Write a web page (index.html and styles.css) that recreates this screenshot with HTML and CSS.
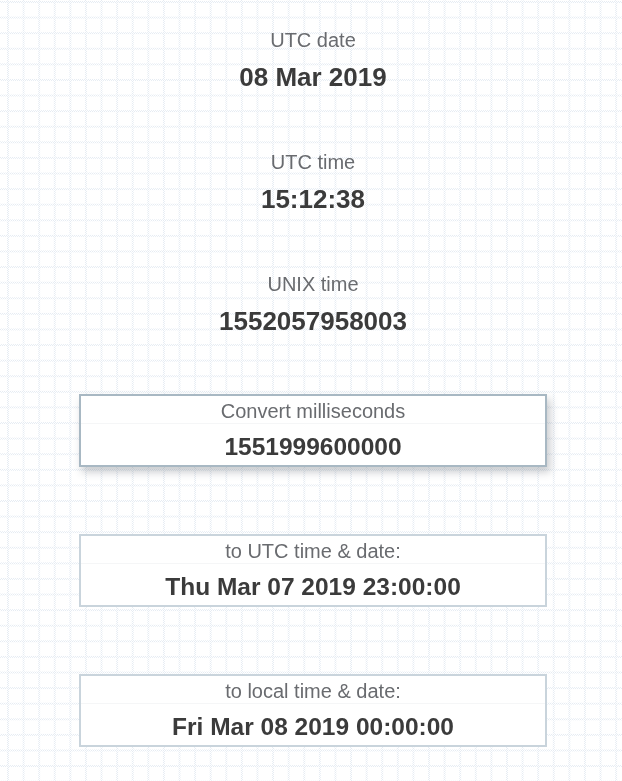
FILE: index.html
```html
<!DOCTYPE html>
<html lang="en">
<head>
<meta charset="utf-8">
<title>UTC time</title>
<link rel="stylesheet" href="styles.css">
</head>
<body>
<main class="page">
  <section class="stat">
    <div class="label">UTC date</div>
    <div class="value">08 Mar 2019</div>
  </section>
  <section class="stat">
    <div class="label">UTC time</div>
    <div class="value">15:12:38</div>
  </section>
  <section class="stat">
    <div class="label">UNIX time</div>
    <div class="value">1552057958003</div>
  </section>
  <section class="card card-input">
    <div class="card-label">Convert milliseconds</div>
    <div class="card-value">1551999600000</div>
  </section>
  <section class="card">
    <div class="card-label">to UTC time &amp; date:</div>
    <div class="card-value">Thu Mar 07 2019 23:00:00</div>
  </section>
  <section class="card">
    <div class="card-label">to local time &amp; date:</div>
    <div class="card-value">Fri Mar 08 2019 00:00:00</div>
  </section>
</main>
</body>
</html>
```
FILE: styles.css
```css
html, body {
  margin: 0;
  padding: 0;
}
body {
  background: #ffffff;
  font-family: "Liberation Sans", Arial, sans-serif;
  min-height: 100vh;
  position: relative;
}
body::before {
  content: "";
  position: fixed;
  inset: 0;
  z-index: -1;
  background-image:
    linear-gradient(to right, #d6e0ec 0, #d6e0ec 2px, transparent 2px),
    linear-gradient(to bottom, #d6e0ec 0, #d6e0ec 2px, transparent 2px);
  background-size: 15.6px 15.6px;
  background-position: 7px 1px;
  -webkit-mask-image: conic-gradient(#000 25%, transparent 0 50%, #000 0 75%, transparent 0);
  mask-image: conic-gradient(#000 25%, transparent 0 50%, #000 0 75%, transparent 0);
  -webkit-mask-size: 2px 2px;
  mask-size: 2px 2px;
  opacity: 0.6;
}
.page {
  width: 468px;
  margin: 0 auto;
  padding: 28px 0 0 4px;
  display: flex;
  flex-direction: column;
  gap: 58px;
}
.stat {
  display: flex;
  flex-direction: column;
  align-items: center;
}
.label {
  font-size: 20px;
  line-height: 24px;
  color: #696b6f;
}
.value {
  margin-top: 10px;
  font-size: 26px;
  line-height: 30px;
  font-weight: bold;
  color: #3b3b3b;
}
.card {
  background: #ffffff;
  border: 2px solid #c9d4dc;
  padding: 3px 0 3px;
  display: flex;
  flex-direction: column;
  align-items: center;
  margin-bottom: 9px;
}
.card-input {
  border-color: #a8b8c3;
  box-shadow: 3px 5px 8px rgba(60, 70, 80, 0.28);
}
.card-label {
  width: 100%;
  text-align: center;
  font-size: 20px;
  line-height: 24px;
  color: #696b6f;
  border-bottom: 1px solid #f5f6f7;
}
.card-value {
  margin-top: 8px;
  font-size: 24.5px;
  line-height: 30px;
  font-weight: bold;
  color: #3b3b3b;
}
```
